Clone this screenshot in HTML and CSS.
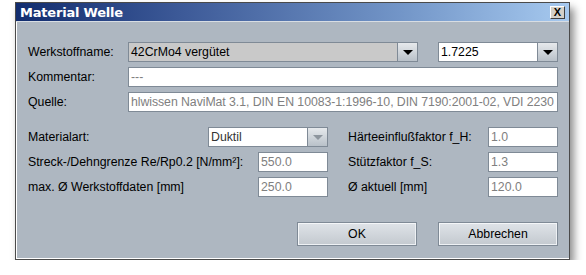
FILE: index.html
```html
<!DOCTYPE html>
<html lang="de">
<head>
    <meta charset="UTF-8">
    <title>Material Welle</title>
    <link rel="stylesheet" href="styles.css">
</head>
<body>
    <div class="window">
        <div class="titlebar">
            <span class="title">Material Welle</span>
            <span class="close">X</span>
        </div>

        <div class="content">
            <div class="top-grid">
                <label>Werkstoffname:</label>
                <div class="combo readonly">
                    <span class="combo-text">42CrMo4 vergütet</span>
                    <span class="arrow"><span class="tri"></span></span>
                </div>
                <div></div>
                <div class="combo">
                    <span class="combo-text">1.7225</span>
                    <span class="arrow"><span class="tri"></span></span>
                </div>

                <label>Kommentar:</label>
                <div class="field wide disabled">---</div>

                <label>Quelle:</label>
                <div class="field wide disabled source">hlwissen NaviMat 3.1, DIN EN 10083-1:1996-10, DIN 7190:2001-02, VDI 2230</div>
            </div>

            <div class="bottom-grid">
                <label>Materialart:</label>
                <div class="combo off span-combo">
                    <span class="combo-text">Duktil</span>
                    <span class="arrow"><span class="tri"></span></span>
                </div>
                <label class="right-label">Härteeinflußfaktor f_H:</label>
                <div class="field disabled">1.0</div>

                <label class="span-label">Streck-/Dehngrenze Re/Rp0.2 [N/mm²]:</label>
                <div class="field disabled">550.0</div>
                <label class="right-label">Stützfaktor f_S:</label>
                <div class="field disabled">1.3</div>

                <label class="span-label">max. Ø Werkstoffdaten [mm]</label>
                <div class="field disabled">250.0</div>
                <label class="right-label">Ø aktuell [mm]</label>
                <div class="field disabled">120.0</div>
            </div>

            <div class="buttons">
                <button>OK</button>
                <button>Abbrechen</button>
            </div>
        </div>
    </div>
</body>
</html>
```

FILE: styles.css
```css
body {
    margin: 0;
    background-color: white;
    font-family: 'Liberation Sans', Arial, sans-serif;
    font-size: 12.3px;
    color: #000;
}

.window {
    box-sizing: border-box;
    width: 555px;
    height: 258px;
    margin: 2px 0 0 15px;
    border: 1px solid #4a4a4a;
    background-color: #aeb7c1;
    box-shadow: 4px 6px 8px rgba(0,0,0,0.45);
    display: flex;
    flex-direction: column;
}

/* ---- title bar ---- */
.titlebar {
    height: 18px;
    display: flex;
    align-items: center;
    justify-content: space-between;
    padding: 0 4px;
    background: linear-gradient(to right, #112c6e 0%, #3d5a98 30%, #7396c8 70%, #a6c9ef 100%);
    border-bottom: 1px solid #d8dde3;
}

.title {
    color: white;
    font-family: 'DejaVu Sans', sans-serif;
    font-weight: bold;
    font-size: 13px;
    letter-spacing: -0.2px;
}

.close {
    box-sizing: border-box;
    width: 15px;
    height: 13px;
    background-color: #d4d0c8;
    border: 1px solid;
    border-color: #fff #404040 #404040 #fff;
    font-size: 11px;
    font-weight: bold;
    line-height: 11px;
    text-align: center;
}

/* ---- content ---- */
.content {
    flex: 1;
    border-left: 1px solid #fff;
    border-bottom: 1px solid #fff;
    padding: 20px 10px 0 11px;
}

.top-grid {
    display: grid;
    grid-template-columns: 100px 290px 20px 120px;
    grid-auto-rows: 20px;
    row-gap: 5px;
    align-items: center;
}

.bottom-grid {
    display: grid;
    grid-template-columns: 180px 50px 70px 160px 70px;
    grid-auto-rows: 20px;
    row-gap: 5px;
    margin-top: 15px;
    align-items: center;
}

.span-combo {
    grid-column: 2 / 4;
}

.span-label {
    grid-column: 1 / 3;
}

.right-label {
    padding-left: 20px;
}

label {
    white-space: nowrap;
}

.field,
.combo {
    box-sizing: border-box;
    height: 20px;
    border: 1px solid #7f8a96;
    background-color: white;
    line-height: 18px;
    padding: 0 2px;
    white-space: nowrap;
    overflow: hidden;
}

.wide {
    grid-column: 2 / 5;
}

.disabled {
    color: #808080;
}

.source {
    letter-spacing: -0.06px;
}

.combo {
    display: flex;
    padding: 0;
}

.combo-text {
    flex: 1;
    padding-left: 2px;
}

.readonly {
    background-color: #c9c9c9;
}

.off .combo-text {
    color: #333;
}

.arrow {
    width: 19px;
    border-left: 1px solid #7f8a96;
    background: linear-gradient(#e6e9ec, #b9c1c9);
    display: flex;
    align-items: center;
    justify-content: center;
}

.tri {
    width: 0;
    height: 0;
    border-left: 5px solid transparent;
    border-right: 5px solid transparent;
    border-top: 5px solid #000;
}

.off .tri {
    border-top-color: #8e969e;
}

/* ---- buttons ---- */
.buttons {
    display: flex;
    justify-content: flex-end;
    gap: 21px;
    margin-top: 25px;
    padding-right: 1px;
}

button {
    box-sizing: border-box;
    width: 120px;
    height: 24px;
    border: 1px solid #7f8a96;
    box-shadow: inset 1px 1px #f4f6f8, inset -1px -1px #eef1f4;
    background: linear-gradient(#dfe3e8, #c3c9cf);
    font-family: 'Liberation Sans', Arial, sans-serif;
    font-size: 12.3px;
    color: #000;
    padding: 0;
}
```
